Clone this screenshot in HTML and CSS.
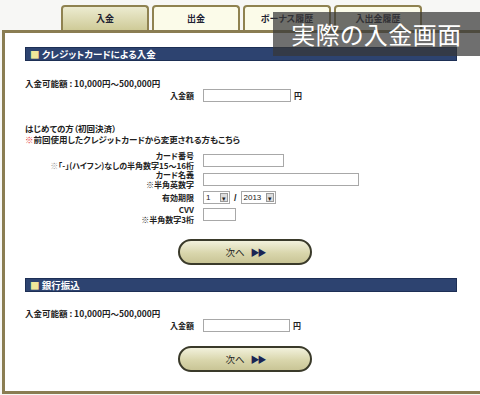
FILE: index.html
```html
<!DOCTYPE html>
<html lang="ja">
<head>
    <meta charset="UTF-8">
    <title>入金</title>
    <link rel="stylesheet" href="styles.css">
</head>
<body>
<div class="pagina">
    <div class="pestanas">
        <div class="pestana activa">入金</div>
        <div class="pestana">出金</div>
        <div class="pestana">ボーナス履歴</div>
        <div class="pestana">入出金履歴</div>
    </div>

    <div class="panel">
        <div class="cabecera"><span class="cuadro">■</span> クレジットカードによる入金</div>
        <p class="limite">入金可能額 : 10,000円～500,000円</p>
        <div class="fila fila-monto">
            <label>入金額</label>
            <div class="campo"><span class="caja caja-monto"></span> 円</div>
        </div>

        <p class="aviso">はじめての方（初回決済）<br><span class="rojo">※</span>前回使用したクレジットカードから変更される方もこちら</p>

        <div class="fila fila-doble">
            <label>カード番号<br><span class="nota"><span class="gris">※</span>｢-｣(ハイフン)なしの半角数字15～16桁</span></label>
            <div class="campo"><span class="caja caja-numero"></span></div>
        </div>
        <div class="fila fila-doble">
            <label>カード名義<br><span class="nota">※半角英数字</span></label>
            <div class="campo"><span class="caja caja-nombre"></span></div>
        </div>
        <div class="fila fila-simple">
            <label>有効期限</label>
            <div class="campo">
                <span class="selector s-mes">1<i>▾</i></span>
                <span class="barra">/</span>
                <span class="selector s-anio">2013<i>▾</i></span>
            </div>
        </div>
        <div class="fila fila-doble">
            <label>CVV<br><span class="nota">※半角数字3桁</span></label>
            <div class="campo"><span class="caja caja-cvv"></span></div>
        </div>

        <div class="boton-zona"><button class="boton">次へ <b>▶▶</b></button></div>

        <div class="cabecera"><span class="cuadro">■</span> 銀行振込</div>
        <p class="limite limite-banco">入金可能額 : 10,000円～500,000円</p>
        <div class="fila fila-monto">
            <label>入金額</label>
            <div class="campo"><span class="caja caja-monto2"></span>円</div>
        </div>
        <div class="boton-zona zona-banco"><button class="boton">次へ <b>▶▶</b></button></div>
    </div>

    <div class="rotulo">実際の入金画面</div>
</div>
</body>
</html>
```

FILE: styles.css
```css
body {
    margin: 0;
    background: #f7f7f5;
    font-family: "Noto Sans CJK JP", "Noto Sans", sans-serif;
    font-feature-settings: "palt";
    color: #222;
    overflow: hidden;
}
.pagina {
    position: relative;
    width: 480px;
    height: 395px;
}
.pestanas {
    display: flex;
    gap: 3px;
    padding: 5px 0 0 61px;
    height: 25px;
}
.pestana {
    width: 84px;
    height: 23px;
    border: 2px solid #8f8250;
    border-bottom: none;
    border-radius: 4px 4px 0 0;
    background: #fbfbe9;
    font-size: 9px;
    font-weight: bold;
    line-height: 23px;
    text-align: center;
    color: #1e2233;
}
.pestana.activa {
    background: linear-gradient(#ecebd0, #cfcb98);
}
.panel {
    margin-left: 2px;
    width: 490px;
    height: 364px;
    border: 3px solid #8a7d52;
    border-right: none;
    background: #fff;
    padding-top: 14px;
    box-sizing: border-box;
}
.cabecera {
    margin-left: 20px;
    width: 432px;
    height: 14px;
    background: #2d4370;
    border: 1px solid #1d2f55;
    box-sizing: border-box;
    color: #fff;
    font-size: 9.5px;
    font-weight: bold;
    line-height: 12px;
    padding-left: 4px;
}
.cuadro {
    color: #efe79a;
}
.limite {
    margin: 16px 0 0 20px;
    font-size: 8.5px;
    font-weight: bold;
    line-height: 12px;
}
.limite-banco {
    margin-top: 15px;
}
.fila {
    display: grid;
    grid-template-columns: 189px 1fr;
    column-gap: 9px;
    align-items: center;
    font-size: 8px;
    font-weight: bold;
}
.fila label {
    text-align: right;
    line-height: 9.5px;
}
.fila-simple {
    margin: 2px 0 1px;
}
.gris {
    color: #999;
}
.campo {
    display: flex;
    align-items: center;
    gap: 3px;
}
.caja {
    display: inline-block;
    height: 11px;
    border: 1px solid #a8a8a8;
    background: #fff;
}
.caja-monto { width: 86px; }
.caja-monto2 { width: 85px; }
.caja-numero { width: 79px; }
.caja-nombre { width: 154px; }
.caja-cvv { width: 31px; }
.selector {
    display: inline-flex;
    justify-content: space-between;
    align-items: center;
    height: 11px;
    border: 1px solid #a8a8a8;
    padding-left: 2px;
    font-weight: normal;
    font-size: 8px;
    font-family: "Liberation Sans", sans-serif;
}
.selector i {
    font-style: normal;
    width: 8px;
    height: 9px;
    margin-right: 1px;
    background: #ddd;
    border: 1px solid #999;
    font-size: 7px;
    line-height: 9px;
    text-align: center;
    box-sizing: border-box;
}
.s-mes { width: 23px; }
.s-anio { width: 31px; }
.barra {
    font-family: "Liberation Sans", sans-serif;
    font-size: 9px;
    margin: 0 1px;
}
.aviso {
    margin: 21px 0 6px 20px;
    font-size: 8.5px;
    font-weight: bold;
    line-height: 11px;
}
.rojo {
    color: #e43b3b;
}
.boton-zona {
    margin: 15px 0 13px 173px;
}
.zona-banco {
    margin-top: 14px;
}
.boton {
    display: block;
    width: 134px;
    height: 26px;
    border: 2px solid #3a3a2a;
    border-radius: 13px;
    background: linear-gradient(#f2f1dc, #d9d6ac 55%, #c9c596);
    font-family: "Noto Sans CJK JP", sans-serif;
    font-size: 9.5px;
    color: #222;
    padding: 0;
}
.boton b {
    color: #1a2454;
    font-size: 9px;
    margin-left: 4px;
    letter-spacing: -2px;
}
.rotulo {
    position: absolute;
    left: 273px;
    top: 12px;
    width: 207px;
    height: 44px;
    background: rgba(55, 55, 55, 0.72);
    color: #fff;
    font-size: 24px;
    line-height: 44px;
    text-align: center;
    letter-spacing: 0.5px;
}
```
